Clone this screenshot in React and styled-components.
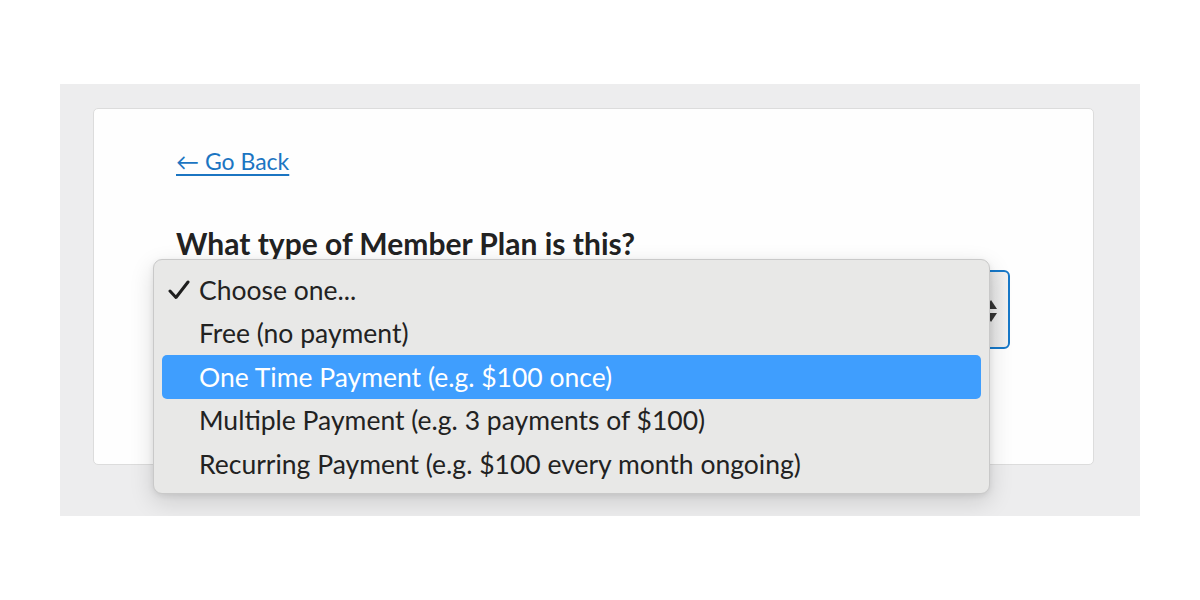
import React from "react";
import styled, { createGlobalStyle } from "styled-components";

const Global = createGlobalStyle`
  html, body { margin: 0; padding: 0; background: #ffffff; }
  body { font-family: Lato, "Noto Sans", sans-serif; }
`;

const Stage = styled.div`
  margin: 84px 0 0 60px;
  width: 1080px;
  height: 432px;
  box-sizing: border-box;
  background: #ededee;
  padding: 24px 46px 0 33px;
`;

const Card = styled.div`
  position: relative;
  box-sizing: border-box;
  height: 357px;
  background: #fefefe;
  border: 1px solid #dcdcdc;
  border-radius: 5px;
  padding: 37px 83px 0 82px;
`;

const BackLink = styled.a`
  display: inline-block;
  font-size: 23px;
  line-height: 30px;
  color: #1b75c2;
  text-decoration: underline;
  text-underline-offset: 4px;
  text-decoration-thickness: 1.5px;
`;

const Question = styled.h2`
  margin: 49px 0 0;
  font-size: 30px;
  line-height: 36px;
  font-weight: 700;
  color: #222222;
`;

const SelectBox = styled.div`
  margin-top: 9px;
  height: 79px;
  box-sizing: border-box;
  border: 2.5px solid #1778c8;
  border-radius: 6px;
  background: linear-gradient(to right, #fdfdfd 0%, #fdfdfd 92%, #e4e4e4 98%, #f2f2f2 100%);
  display: flex;
  align-items: center;
  justify-content: flex-end;
  padding-right: 10px;
`;

const Arrows = styled.svg`
  width: 14px;
  height: 24px;
  margin-top: 2px;
`;

const Menu = styled.ul`
  position: absolute;
  left: 59px;
  top: 150px;
  width: 837px;
  height: 235px;
  box-sizing: border-box;
  margin: 0;
  padding: 8px 8px;
  list-style: none;
  background: #e8e8e7;
  border: 1px solid #c9c9c9;
  border-radius: 9px;
  box-shadow: 0 8px 24px rgba(0, 0, 0, 0.14), 0 2px 6px rgba(0, 0, 0, 0.08);
`;

const Item = styled.li`
  position: relative;
  height: 43.5px;
  display: flex;
  align-items: center;
  padding-left: 37px;
  border-radius: 5px;
  font-size: 26.5px;
  color: ${(p) => (p.$active ? "#ffffff" : "#222222")};
  background: ${(p) => (p.$active ? "#3f9efe" : "transparent")};
`;

const Check = styled.svg`
  position: absolute;
  left: 6px;
  top: 50%;
  width: 22px;
  height: 20px;
  transform: translateY(-50%);
`;

const options = [
  { label: "Choose one...", checked: true },
  { label: "Free (no payment)" },
  { label: "One Time Payment (e.g. $100 once)", active: true },
  { label: "Multiple Payment (e.g. 3 payments of $100)" },
  { label: "Recurring Payment (e.g. $100 every month ongoing)" },
];

export default function App() {
  return (
    <>
      <Global />
      <Stage>
        <Card>
          <BackLink href="#">← Go Back</BackLink>
          <Question>What type of Member Plan is this?</Question>
          <SelectBox>
            <Arrows viewBox="0 0 14 24">
              <path d="M7 1 L13 10 H1 Z" fill="#333" />
              <path d="M7 23 L13 14 H1 Z" fill="#333" />
            </Arrows>
          </SelectBox>
          <Menu>
            {options.map((o) => (
              <Item key={o.label} $active={o.active}>
                {o.checked && (
                  <Check viewBox="0 0 22 20">
                    <path
                      d="M2 11 L8 17.5 L20 2"
                      fill="none"
                      stroke="#1e1e1e"
                      strokeWidth="3"
                      strokeLinecap="round"
                      strokeLinejoin="round"
                    />
                  </Check>
                )}
                {o.label}
              </Item>
            ))}
          </Menu>
        </Card>
      </Stage>
    </>
  );
}
